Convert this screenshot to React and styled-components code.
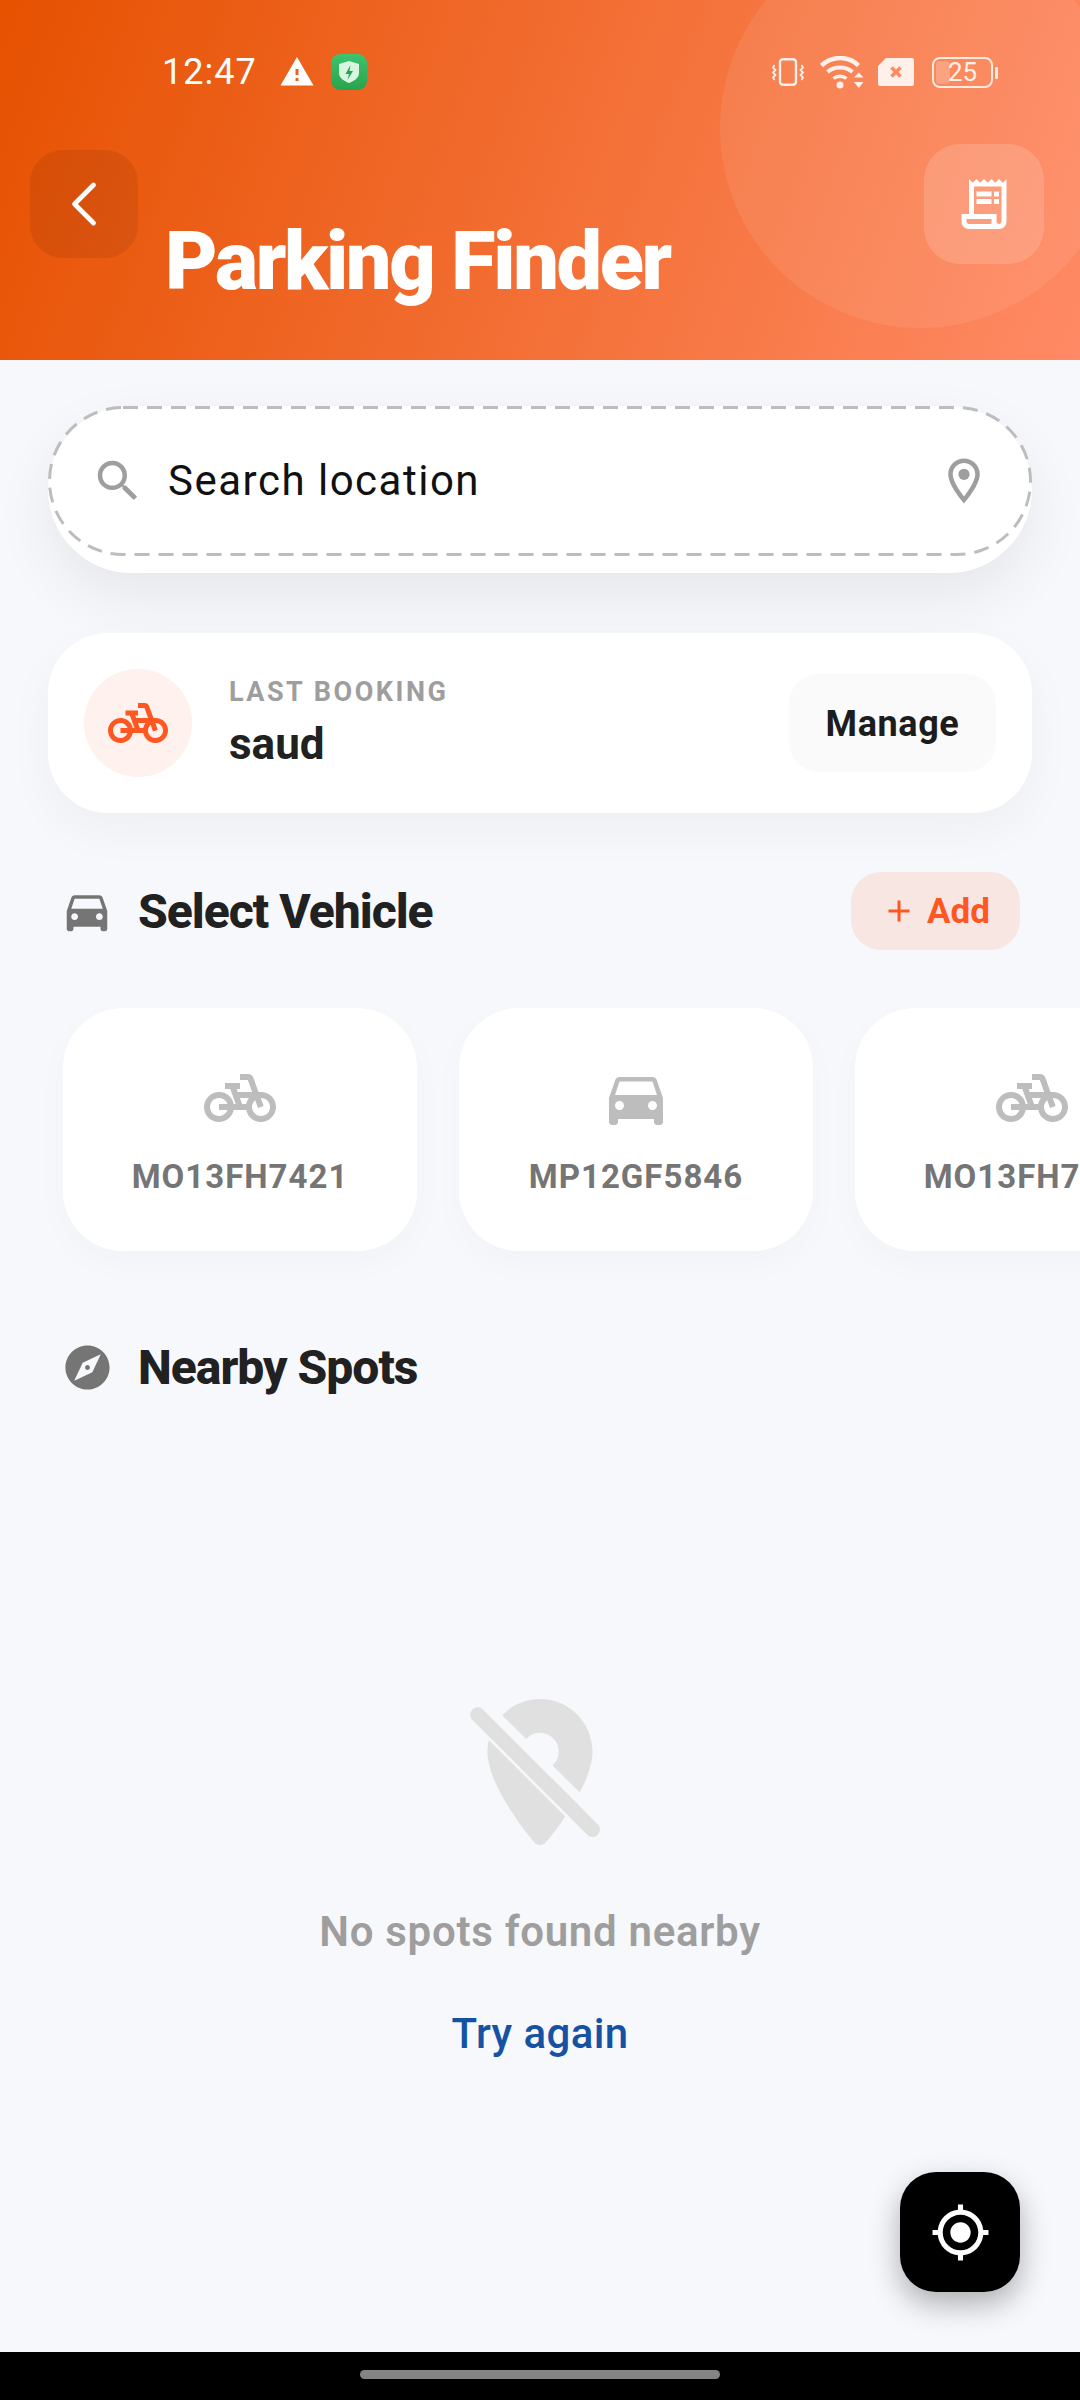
import React from 'react'
import styled, { createGlobalStyle } from 'styled-components'
import {
  MdPedalBike, MdDirectionsCar, MdExplore, MdMyLocation, MdSearch,
  MdOutlineLocationOn, MdOutlineReceiptLong, MdWarning, MdAdd,
} from 'react-icons/md'
import { ChevronLeft } from 'lucide-react'

const GlobalStyle = createGlobalStyle`
  html, body {
    margin: 0;
    padding: 0;
    background: #f7f8fc;
  }
  * { box-sizing: border-box; }
`

const Screen = styled.div`
  position: relative;
  width: 1080px;
  height: 2400px;
  overflow: hidden;
  display: flex;
  flex-direction: column;
  background: #f7f8fc;
  font-family: Roboto, "Noto Sans", sans-serif;
`

const Header = styled.header`
  position: relative;
  flex: 0 0 360px;
  overflow: hidden;
  background: linear-gradient(110deg, #e65100 0%, #ff8a65 100%);
`

const HeaderCircle = styled.div`
  position: absolute;
  top: -72px;
  left: 720px;
  width: 400px;
  height: 400px;
  border-radius: 50%;
  background: rgba(255, 255, 255, 0.08);
`

const StatusBar = styled.div`
  position: relative;
  height: 144px;
  padding: 54px 87px 0 162px;
  display: flex;
  align-items: flex-start;
  justify-content: space-between;
`

const StatusGroup = styled.div`
  display: flex;
  align-items: center;
  height: 36px;
`

const Clock = styled.span`
  width: 93px;
  margin-right: 24px;
  color: #fff;
  font-size: 36px;
  line-height: 36px;
  letter-spacing: 1px;
`

const WarnIcon = styled(MdWarning)`
  width: 36px;
  height: 36px;
  color: #fff;
  margin-right: 16px;
`

const AppBadge = styled.svg`
  width: 36px;
  height: 36px;
`

const SysIcon = styled.svg`
  color: #fff1ea;
  flex: none;
  margin-left: ${p => p.$left || 0}px;
`

const Battery = styled.div`
  position: relative;
  width: 61px;
  height: 31px;
  margin-left: 18px;
  border: 2.5px solid #ffeadf;
  border-radius: 8px;
  display: flex;
  align-items: center;
  justify-content: center;
  &::before {
    content: '';
    position: absolute;
    left: 2px;
    top: 2px;
    bottom: 2px;
    width: 14px;
    border-radius: 4px;
    background: rgba(255, 255, 255, 0.22);
  }
  &::after {
    content: '';
    position: absolute;
    right: -7px;
    top: 8px;
    width: 3px;
    height: 12px;
    border-radius: 1px;
    background: #ffeadf;
  }
`

const BatteryText = styled.span`
  position: relative;
  color: #fff1ea;
  font-size: 26px;
  line-height: 26px;
`

const ActionRow = styled.div`
  position: relative;
  display: flex;
  align-items: flex-start;
  padding: 0 36px 0 30px;
`

const BackButton = styled.button`
  flex: none;
  width: 108px;
  height: 108px;
  margin-top: 6px;
  border: 0;
  padding: 0;
  border-radius: 33px;
  background: rgba(0, 0, 0, 0.07);
  color: #fff;
  display: flex;
  align-items: center;
  justify-content: center;
`

const Title = styled.h1`
  flex: 1;
  margin: 70px 0 0 27px;
  color: #fff;
  font-size: 81px;
  line-height: 95px;
  font-weight: 900;
  letter-spacing: -2.35px;
  white-space: nowrap;
`

const ReceiptButton = styled.button`
  flex: none;
  width: 120px;
  height: 120px;
  border: 0;
  padding: 0;
  border-radius: 36px;
  background: rgba(255, 255, 255, 0.15);
  color: #fff;
  display: flex;
  align-items: center;
  justify-content: center;
`

const Main = styled.main`
  flex: 1;
  min-height: 0;
  padding-top: 46px;
  display: flex;
  flex-direction: column;
`

const SearchShell = styled.div`
  margin: 0 48px;
  padding-bottom: 17px;
  border-radius: 84px;
  background: #fff;
  box-shadow: 0 24px 60px rgba(0, 0, 0, 0.07);
`

const SearchField = styled.div`
  position: relative;
  height: 150px;
  padding: 0 41px 0 43px;
  display: flex;
  align-items: center;
`

const DashedOutline = styled.svg`
  position: absolute;
  inset: 0;
  width: 100%;
  height: 100%;
  fill: none;
  stroke: #bdbdbd;
  stroke-width: 3;
  stroke-dasharray: 15 9;
`

const SearchIcon = styled(MdSearch)`
  width: 54px;
  height: 54px;
  color: #9e9e9e;
  flex: none;
`

const SearchText = styled.span`
  flex: 1;
  margin: -2px 0 0 23px;
  color: #111;
  font-size: 42px;
  letter-spacing: 1.5px;
`

const PinIcon = styled(MdOutlineLocationOn)`
  width: 54px;
  height: 54px;
  color: #9e9e9e;
  flex: none;
`

const BookingCard = styled.section`
  margin: 60px 48px 0;
  height: 180px;
  padding: 0 36px;
  display: flex;
  align-items: center;
  background: #fff;
  border-radius: 60px;
  box-shadow: 0 18px 48px rgba(0, 0, 0, 0.04);
`

const BookingAvatar = styled.div`
  flex: none;
  width: 108px;
  height: 108px;
  border-radius: 50%;
  background: #fff1ed;
  color: #ff5722;
  display: flex;
  align-items: center;
  justify-content: center;
`

const BookingInfo = styled.div`
  flex: 1;
  margin-left: 37px;
`

const BookingLabel = styled.div`
  margin-top: -1px;
  color: #9e9e9e;
  font-size: 27px;
  line-height: 32px;
  font-weight: 700;
  letter-spacing: 2.5px;
`

const BookingName = styled.div`
  margin-top: 11px;
  color: #212121;
  font-size: 44px;
  line-height: 50px;
  font-weight: 700;
`

const ManageButton = styled.button`
  width: 207px;
  height: 98px;
  padding: 2px 0 0;
  border: 0;
  border-radius: 30px;
  background: #fafafa;
  color: #1c1c1c;
  font-family: inherit;
  font-size: 36px;
  font-weight: 700;
  letter-spacing: 0.6px;
`

const SectionRow = styled.div`
  display: flex;
  align-items: center;
  height: ${p => p.$height}px;
  margin-top: ${p => p.$top}px;
  padding: 0 60px 0 66px;
`

const SectionTitle = styled.h2`
  flex: 1;
  margin: 0 0 0 30px;
  color: #212121;
  font-size: 48px;
  font-weight: 800;
  letter-spacing: -1px;
`

const SectionIcon = styled.span`
  flex: none;
  width: 42px;
  display: flex;
  justify-content: center;
  color: #757575;
  svg {
    flex: none;
  }
`

const AddButton = styled.button`
  width: 169px;
  height: 78px;
  border: 0;
  padding: 0;
  border-radius: 30px;
  background: #f8e6e2;
  color: #ff5722;
  display: flex;
  align-items: center;
  justify-content: center;
  gap: 10px;
  font-family: inherit;
  font-size: 35px;
  font-weight: 700;
`

const VehicleRail = styled.div`
  margin-top: 58px;
  padding-left: 63px;
  display: flex;
  gap: 42px;
  overflow: hidden;
  padding-bottom: 40px;
`

const VehicleCard = styled.div`
  flex: none;
  width: 354px;
  height: 243px;
  background: #fff;
  border-radius: 60px;
  box-shadow: 0 12px 36px rgba(0, 0, 0, 0.025);
  display: flex;
  flex-direction: column;
  align-items: center;
  justify-content: center;
  color: #bdbdbd;
`

const VehicleCode = styled.div`
  margin-top: 23px;
  color: #757575;
  font-size: 33px;
  line-height: 40px;
  font-weight: 700;
  letter-spacing: 1px;
  white-space: nowrap;
`

const EmptyState = styled.div`
  margin-top: 290px;
  display: flex;
  flex-direction: column;
  align-items: center;
`

const EmptyIcon = styled.svg`
  width: 180px;
  height: 180px;
  fill: #e0e0e0;
  stroke: #e0e0e0;
`

const EmptyText = styled.div`
  margin-top: 43px;
  color: #9e9e9e;
  font-size: 42px;
  line-height: 50px;
  font-weight: 600;
  letter-spacing: 0.7px;
`

const RetryLink = styled.button`
  margin-top: 52px;
  border: 0;
  padding: 0;
  background: none;
  color: #1552a3;
  font-family: inherit;
  font-size: 42px;
  line-height: 50px;
  font-weight: 500;
  letter-spacing: 0.4px;
`

const LocateFab = styled.button`
  position: absolute;
  left: 900px;
  top: 2172px;
  width: 120px;
  height: 120px;
  border: 0;
  padding: 0;
  border-radius: 36px;
  background: #000;
  color: #fff;
  display: flex;
  align-items: center;
  justify-content: center;
  box-shadow: 0 12px 30px rgba(0, 0, 0, 0.3);
`

const NavBar = styled.footer`
  flex: 0 0 48px;
  background: #000;
  display: flex;
  justify-content: center;
  padding-top: 18px;
`

const NavHandle = styled.div`
  width: 360px;
  height: 9px;
  border-radius: 4.5px;
  background: #848484;
`

const vehicles = [
  { code: 'MO13FH7421', Icon: MdPedalBike },
  { code: 'MP12GF5846', Icon: MdDirectionsCar },
  { code: 'MO13FH7421', Icon: MdPedalBike },
]

const App = () => {
  return (
    <Screen>
      <GlobalStyle />
      <Header>
        <HeaderCircle />
        <StatusBar>
          <StatusGroup>
            <Clock>12:47</Clock>
            <WarnIcon />
            <AppBadge viewBox="0 0 36 36">
              <defs>
                <linearGradient id="badge" x1="0" y1="0" x2="0" y2="1">
                  <stop offset="0" stopColor="#3ec46d" />
                  <stop offset="1" stopColor="#27a34d" />
                </linearGradient>
              </defs>
              <rect width="36" height="36" rx="9" fill="url(#badge)" />
              <path d="M18 7l10 3v9c0 5-5 8-10 10-5-2-10-5-10-10v-9z" fill="#d8f5e2" />
              <path d="M19.5 11l-5 9h3.5l-1.5 6 5.5-9h-3.5z" fill="#27a34d" />
            </AppBadge>
          </StatusGroup>
          <StatusGroup>
            <SysIcon width="32" height="28" viewBox="0 0 32 28" fill="none" stroke="currentColor">
              <rect x="8" y="1.2" width="16" height="25.6" rx="3" strokeWidth="2.4" />
              <path d="M2.5 7l-1.5 2.5 2.5 2.5-2.5 2.5 2.5 2.5-2.5 2.5 1.5 2.5" strokeWidth="1.8" />
              <path d="M29.5 7l1.5 2.5-2.5 2.5 2.5 2.5-2.5 2.5 2.5 2.5-1.5 2.5" strokeWidth="1.8" />
            </SysIcon>
            <SysIcon $left={16} width="44" height="33" viewBox="0 0 44 33" fill="none">
              <path d="M1.5 9.5c10.500-10 27-10 37 0" stroke="currentColor" strokeWidth="4.5" />
              <path d="M7.500 16c7-6 18-6 25 0" stroke="currentColor" strokeWidth="4" />
              <path d="M13.500 22.500c3.500-3 9.500-3 13 0" stroke="currentColor" strokeWidth="3.5" />
              <circle cx="20" cy="29" r="3.500" fill="currentColor" />
              <path d="M34 21.500h9.500l-4.750-5zM34 26h9.500l-4.750 6z" fill="currentColor" />
            </SysIcon>
            <SysIcon $left={14} width="36" height="28" viewBox="0 0 36 28">
              <path d="M8 0h26a2 2 0 012 2v24a2 2 0 01-2 2H2a2 2 0 01-2-2V8z" fill="currentColor" />
              <path d="M13.500 9.500l9 9M22.500 9.500l-9 9" stroke="#ff8a62" strokeWidth="3.600" />
            </SysIcon>
            <Battery>
              <BatteryText>25</BatteryText>
            </Battery>
          </StatusGroup>
        </StatusBar>
        <ActionRow>
          <BackButton>
            <ChevronLeft size={76} strokeWidth={1.5} />
          </BackButton>
          <Title>Parking Finder</Title>
          <ReceiptButton>
            <MdOutlineReceiptLong size={60} />
          </ReceiptButton>
        </ActionRow>
      </Header>

      <Main>
        <SearchShell>
          <SearchField>
            <DashedOutline viewBox="0 0 984 150">
              <rect x="1.500" y="1.500" width="981" height="147" rx="73.500" />
            </DashedOutline>
            <SearchIcon />
            <SearchText>Search location</SearchText>
            <PinIcon />
          </SearchField>
        </SearchShell>

        <BookingCard>
          <BookingAvatar>
            <MdPedalBike size={60} />
          </BookingAvatar>
          <BookingInfo>
            <BookingLabel>LAST BOOKING</BookingLabel>
            <BookingName>saud</BookingName>
          </BookingInfo>
          <ManageButton>Manage</ManageButton>
        </BookingCard>

        <SectionRow $height={78} $top={59}>
          <SectionIcon>
            <MdDirectionsCar size={54} />
          </SectionIcon>
          <SectionTitle>Select Vehicle</SectionTitle>
          <AddButton>
            <MdAdd size={36} />
            Add
          </AddButton>
        </SectionRow>

        <VehicleRail>
          {vehicles.map(({ code, Icon }, i) => (
            <VehicleCard key={i}>
              <Icon size={72} />
              <VehicleCode>{code}</VehicleCode>
            </VehicleCard>
          ))}
        </VehicleRail>

        <SectionRow $height={54} $top={49}>
          <SectionIcon>
            <MdExplore size={53} />
          </SectionIcon>
          <SectionTitle>Nearby Spots</SectionTitle>
        </SectionRow>

        <EmptyState>
          <EmptyIcon viewBox="0 0 24 24">
            <path
              stroke="none"
              d="M12 6.500c1.380 0 2.500 1.120 2.500 2.500 0 .74-.33 1.390-.83 1.850l3.630 3.630c.98-1.860 1.700-3.800 1.700-5.480 0-3.870-3.130-7-7-7-1.980 0-3.760.83-5.040 2.150l3.190 3.190c.46-.52 1.110-.84 1.850-.84z"
            />
            <path
              stroke="none"
              d="M5.180 7.450C5.070 7.950 5 8.470 5 9c0 4.170 4.420 9.920 6.240 12.110.4.480 1.130.48 1.530 0 .73-.88 1.740-2.170 2.610-3.460z"
            />
            <path d="M3.700 4.100L19 19.400" strokeWidth="2" strokeLinecap="round" fill="none" />
          </EmptyIcon>
          <EmptyText>No spots found nearby</EmptyText>
          <RetryLink>Try again</RetryLink>
        </EmptyState>
      </Main>

      <LocateFab>
        <MdMyLocation size={61} />
      </LocateFab>

      <NavBar>
        <NavHandle />
      </NavBar>
    </Screen>
  )
}

export default App
